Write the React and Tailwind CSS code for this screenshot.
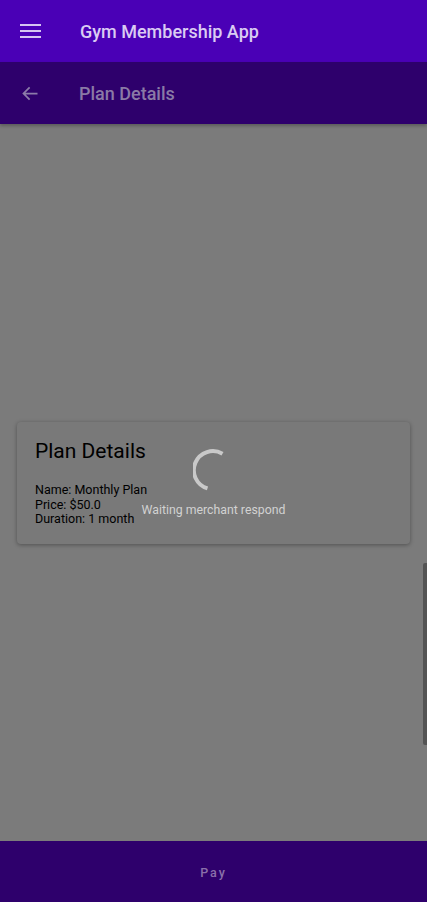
export default function App() {
  return (
    <div
      className="relative flex flex-col h-[902px] w-full bg-[#7b7b7b] overflow-hidden"
      style={{ fontFamily: "Roboto, 'Liberation Sans', sans-serif" }}
    >
      {/* top app bar */}
      <div className="h-[62px] shrink-0 bg-[#4a00b6] flex items-center px-5 gap-[38px]">
        <svg width="22" height="16" viewBox="0 0 22 16" className="shrink-0">
          <rect x="0" y="1" width="21" height="2" fill="#d6c4f2" />
          <rect x="0" y="7" width="21" height="2" fill="#d6c4f2" />
          <rect x="0" y="13" width="21" height="2" fill="#d6c4f2" />
        </svg>
        <span className="text-[18px] font-medium text-[#dacbf3]">Gym Membership App</span>
      </div>

      {/* page bar */}
      <div className="h-[62px] shrink-0 bg-[#2e006c] flex items-center px-5 gap-[38px] shadow-[0_2px_3px_rgba(0,0,0,0.25)]">
        <svg width="21" height="21" viewBox="0 0 24 24" className="shrink-0">
          <path d="M20 12H4M11 5l-7 7 7 7" fill="none" stroke="#8c7ba9" strokeWidth="2" />
        </svg>
        <span className="text-[18px] font-medium text-[#8a7aa6]">Plan Details</span>
      </div>

      {/* content */}
      <div className="flex-1 flex flex-col px-[17px] pt-[298px]">
        <div className="relative bg-[#797979] rounded-[4px] h-[122px] shadow-[0_1px_4px_rgba(0,0,0,0.35)] px-[18px] pt-[16px]">
          <div className="text-[21px] leading-[27px] text-black">Plan Details</div>
          <div className="mt-[18px] text-[12.5px] leading-[14.5px] text-black">
            <div>Name: Monthly Plan</div>
            <div>Price: $50.0</div>
            <div>Duration: 1 month</div>
          </div>

          {/* loading overlay */}
          <div className="absolute left-0 right-0 top-[27px] flex flex-col items-center">
            <svg width="44" height="44" viewBox="0 0 44 44" className="ml-[2px]">
              <path
                d="M29.5 4.8 A19 19 0 1 0 14.5 39.4"
                fill="none"
                stroke="#c9c9c9"
                strokeWidth="4"
              />
            </svg>
            <div className="mt-[8px] text-[12.3px] text-[#d2d2d2]">Waiting merchant respond</div>
          </div>
        </div>
      </div>

      {/* scrollbar */}
      <div className="absolute right-0 top-[563px] w-[4px] h-[182px] bg-[#545454] rounded-l-[2px]" />

      {/* bottom bar */}
      <div className="h-[61px] shrink-0 bg-[#2e006c] flex items-center justify-center pt-[3px]">
        <span className="text-[12.5px] font-medium tracking-[2px] text-[#8a70aa]">Pay</span>
      </div>
    </div>
  );
}
